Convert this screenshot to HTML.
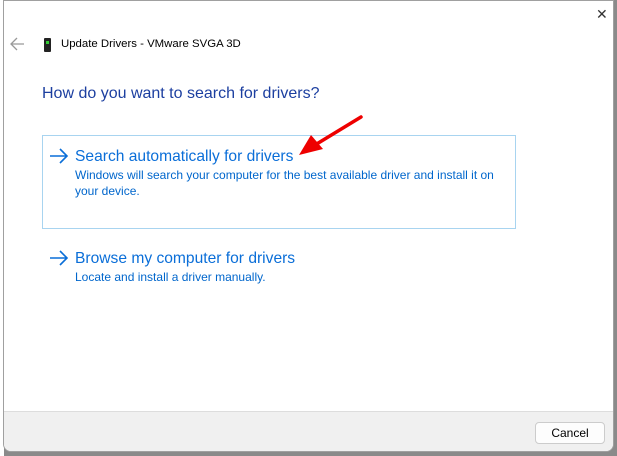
<!DOCTYPE html>
<html><head><meta charset="utf-8"><style>
*{margin:0;padding:0;box-sizing:border-box}
body{width:617px;height:456px;overflow:hidden;background:#8a8a8a;font-family:"Segoe UI","Liberation Sans",sans-serif;position:relative}
.strip{position:absolute;left:0;top:0;width:4px;height:456px;background:#fff}
.win{position:absolute;left:3px;top:0;width:611px;height:452px;background:#fff;border:1px solid #a0a0a0;border-radius:0 0 8px 8px;overflow:hidden}
.close{position:absolute;left:592px;top:5px;font-size:14px;color:#333}
.title{position:absolute;left:57px;top:37px;font-size:11.4px;color:#000}
.dev{position:absolute;left:40px;top:37px;width:7px;height:14px;background:#222;border-radius:1px}
.dev:after{content:"";position:absolute;left:2px;top:3px;width:3px;height:3px;background:#3c3}
h1{position:absolute;left:38px;top:84px;font-size:16px;font-weight:normal;color:#1c3fa0}
.box{position:absolute;left:38px;top:134px;width:474px;height:94px;border:1px solid #a8d4f0}
.opt{position:absolute}
.opt .h{font-size:15.6px;color:#0a6ed8;line-height:20px}
.opt .s{font-size:12px;line-height:16px;color:#0066cc}
.foot{position:absolute;left:0;top:410px;width:611px;height:42px;background:#f0f0f0;border-top:1px solid #ddd}
.btn{position:absolute;left:531px;top:10px;width:70px;height:22px;background:#fdfdfd;border:1px solid #ccc;border-radius:4px;font-size:12px;text-align:center;line-height:20px;color:#000}
</style></head><body>
<div class="strip"></div>
<div class="win">
<div class="close">✕</div>
<div class="dev"></div>
<div class="title">Update Drivers - VMware SVGA 3D</div>
<h1>How do you want to search for drivers?</h1>
<div class="box"></div>
<div class="opt" style="left:71px;top:146px"><div class="h">Search automatically for drivers</div><div class="s">Windows will search your computer for the best available driver and install it on<br>your device.</div></div>
<div class="opt" style="left:71px;top:248px"><div class="h">Browse my computer for drivers</div><div class="s">Locate and install a driver manually.</div></div>
<div class="foot"><div class="btn">Cancel</div></div>
</div>
<svg style="position:absolute;left:0;top:0" width="617" height="456" fill="none">
<path d="M11 44h13M17 38l-6 6 6 6" stroke="#999" stroke-width="1.3"/>
<path d="M50 156h17M60 149l7 7-7 7" stroke="#0a6ed8" stroke-width="1.6"/>
<path d="M50 258h17M60 251l7 7-7 7" stroke="#0a6ed8" stroke-width="1.6"/>
<line x1="361" y1="117" x2="315" y2="145" stroke="#e00" stroke-width="3.5" stroke-linecap="round"/>
<polygon points="299,155 311,135 323,149" fill="#e00"/>
</svg>
</body></html>
